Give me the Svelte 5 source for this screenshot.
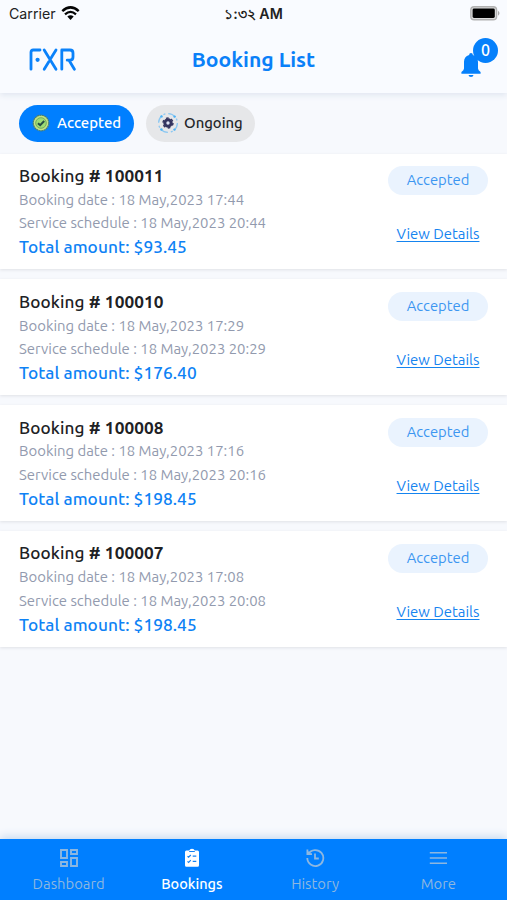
<script>
  const bookings = [
    { id: '100011', date: '18 May,2023 17:44', schedule: '18 May,2023 20:44', total: '$93.45' },
    { id: '100010', date: '18 May,2023 17:29', schedule: '18 May,2023 20:29', total: '$176.40' },
    { id: '100008', date: '18 May,2023 17:16', schedule: '18 May,2023 20:16', total: '$198.45' },
    { id: '100007', date: '18 May,2023 17:08', schedule: '18 May,2023 20:08', total: '$198.45' }
  ];
</script>

<div class="screen">
  <header>
    <div class="status">
      <div class="carrier">
        <span>Carrier</span>
        <svg width="19" height="15" viewBox="0 0 19 15">
          <path d="M1.3 5.1Q9.5-2.3 17.7 5.1" fill="none" stroke="#050505" stroke-width="2.5" />
          <path d="M4 8.3Q9.5 3.4 15 8.3" fill="none" stroke="#050505" stroke-width="2.3" />
          <path d="M6.3 10.6Q9.5 7.8 12.7 10.6L9.5 14Z" fill="#050505" />
        </svg>
      </div>
      <span class="time">১:৩২ AM</span>
      <svg class="battery" width="31" height="15" viewBox="0 0 31 15">
        <rect x=".8" y=".8" width="25.8" height="13" rx="3.4" fill="#ddd" stroke="#b1b1b1" stroke-width="1.4" />
        <rect x="2.6" y="2.6" width="22.2" height="9.4" rx="1.4" fill="#000" />
        <path d="M28 4.8Q31 7.3 28 9.8Z" fill="#aaa" />
      </svg>
    </div>
    <div class="title-row">
      <svg class="logo" width="48" height="24" viewBox="0 0 48 24" role="img" aria-label="FXR">
        <g fill="none" stroke="#0b82fa" stroke-width="2.8" stroke-linecap="round" stroke-linejoin="round">
          <path d="M3 21.2V4.2Q3 2 5.2 2H12" />
          <path d="M16.2 2L28 21.2M28 2L22.9 10.2M20.8 13.8L16.2 21.2" />
          <path d="M33.8 21.2V2H42Q45 2 45 5V9Q45 12.2 42 12.2H39.2M41.3 12.8L46.4 21.2" />
        </g>
        <circle cx="9.6" cy="11.8" r="2.1" fill="#0b82fa" />
      </svg>
      <h1>Booking List</h1>
      <div class="bell">
        <svg width="20" height="25" viewBox="0 0 20 25" fill="#0580fb">
          <path d="M10 0Q11.8 0 11.9 2.1Q17 3.6 17 9V15.5Q17 17.4 19.6 19V20.7H.4V19Q3 17.4 3 15.5V9Q3 3.6 8.1 2.1Q8.2 0 10 0Z" />
          <path d="M7.5 22H12.5Q12.2 24 10 24T7.5 22Z" />
        </svg>
        <span class="count">0</span>
      </div>
    </div>
  </header>

  <div class="filters">
    <button class="chip active">
      <svg width="18" height="18" viewBox="0 0 18 18">
        <circle cx="9" cy="9" r="7.8" fill="#c3e283" stroke="#4a7d72" stroke-width="1.2" stroke-dasharray="2 .5" />
        <circle cx="9" cy="9" r="5.3" fill="#9cdc74" stroke="#6ca65c" stroke-width=".9" />
        <path d="M6 9.2L8.2 11.2L12.2 7" fill="none" stroke="#254c45" stroke-width="2" />
      </svg>
      <span>Accepted</span>
    </button>
    <button class="chip">
      <svg width="22" height="22" viewBox="0 0 22 22">
        <circle cx="11" cy="11" r="9.4" fill="none" stroke="#8cc8f2" stroke-width="1.3" stroke-dasharray="8 1.8 2 2.965" />
        <g fill="#4eb2f5"><circle cx="4.5" cy="4.4" r="1.2" /><circle cx="17.6" cy="4.6" r="1.2" /><circle cx="17.5" cy="17.6" r="1.2" /><circle cx="4.4" cy="17.5" r="1.2" /></g>
        <circle cx="11" cy="11" r="3.2" fill="#dce1f3" stroke="#343460" stroke-width="3" />
        <circle cx="11" cy="11" r="5" fill="none" stroke="#343460" stroke-width="1.4" stroke-dasharray="2.6 2.636" />
      </svg>
      <span>Ongoing</span>
    </button>
  </div>

  <main>
    {#each bookings as b (b.id)}
      <article>
        <div class="info">
          <h2>Booking <b># {b.id}</b></h2>
          <p class="meta">Booking date : <span>{b.date}</span></p>
          <p class="meta">Service schedule : <span>{b.schedule}</span></p>
          <p class="total">Total amount: {b.total}</p>
        </div>
        <div class="side">
          <span class="badge">Accepted</span>
          <a href="#details">View Details</a>
        </div>
      </article>
    {/each}
  </main>

  <nav>
    <div class="tab">
      <svg width="20" height="20" viewBox="0 0 20 20" fill="none" stroke="currentColor" stroke-width="1.9">
        <path d="M2 2H8V10H2ZM12 2H18V6H12ZM2 14H8V18H2ZM12 10H18V18H12Z" />
      </svg>
      <span>Dashboard</span>
    </div>
    <div class="tab on">
      <svg width="20" height="20" viewBox="0 0 20 20">
        <path d="M4.4 2.5H7.3Q7.7.8 10 .8T12.7 2.5H15.6Q17 2.5 17 4V17.2Q17 18.8 15.6 18.8H4.4Q3 18.8 3 17.2V4Q3 2.5 4.4 2.5Z" fill="#fff" />
        <path d="M7.2 3.5H12.8M5.5 8.2L6.6 9.2L8.8 7M10.7 8.2H14.3M5.5 13.4L6.6 14.4L8.8 12.2M10.7 13.4H14.3" fill="none" stroke="#1683f3" stroke-width="1.2" />
      </svg>
      <span>Bookings</span>
    </div>
    <div class="tab">
      <svg width="20" height="20" viewBox="0 0 20 20" fill="none" stroke="currentColor" stroke-width="1.8">
        <path d="M3.4 6A8 8 0 1 1 2.3 10M2.4 1.6V6.2H7M10 5.5V10.5H13.8" />
        <path d="M2 2L7 6.9H2Z" fill="currentColor" stroke="none" />
      </svg>
      <span>History</span>
    </div>
    <div class="tab">
      <svg width="20" height="20" viewBox="0 0 20 20" fill="none" stroke="currentColor" stroke-width="1.6">
        <path d="M1.8 4.8H19M1.8 10H19M1.8 15.2H19" />
      </svg>
      <span>More</span>
    </div>
  </nav>
</div>

<style>
  .screen {
    width: 507px;
    height: 900px;
    display: flex;
    flex-direction: column;
    overflow: hidden;
    background: #f7f9fd;
    font-family: Ubuntu, 'Noto Sans', 'Open Sans', sans-serif;
    color: #202124;
  }
  h1, h2, p { margin: 0; font-weight: 500; }
  svg { display: block; flex: none; }
  header {
    height: 92.5px;
    flex: none;
    background: #f9fbff;
    box-shadow: 0 2px 6px #dfe5ef;
  }
  .status {
    height: 27px;
    display: grid;
    grid-template-columns: 1fr auto 1fr;
    align-items: center;
    padding: 0 6px 0 9px;
    font: 14.2px/27px Inter, 'Liberation Sans', sans-serif;
    color: #222;
  }
  .carrier { display: flex; align-items: center; gap: 5px; }
  .time { font-weight: 600; font-size: 14.2px; margin-left: -3px; }
  .battery { justify-self: end; }
  .title-row {
    height: 64px;
    display: grid;
    grid-template-columns: 1fr auto 1fr;
    align-items: center;
    padding: 0 27.5px;
  }
  .logo { margin-left: 0.5px; margin-top: 1px; }
  h1 { font-size: 21.1px; line-height: 28px; font-weight: 700; color: #0a80f8; }
  .bell { position: relative; justify-self: end; width: 37px; height: 40px; margin-right: -18.5px; }
  .bell svg { margin-top: 14px; }
  .count {
    position: absolute;
    right: 0;
    top: -1.5px;
    width: 25px;
    height: 25px;
    border-radius: 50%;
    background: #0580fb;
    color: #fff;
    text-align: center;
    font-size: 16px;
    line-height: 24.5px;
    font-weight: 500;
  }
  .filters { height: 61px; flex: none; display: flex; gap: 12px; padding: 12.5px 19px 0; box-sizing: border-box; }
  .chip {
    width: 109px;
    height: 36.5px;
    display: flex;
    align-items: center;
    gap: 5px;
    padding: 0 0 0 11px;
    border: 0;
    border-radius: 19px;
    background: #e6e7e9;
    color: #25272b;
    font: 500 14.9px/20px Ubuntu, 'Noto Sans', sans-serif;
  }
  .chip.active { width: 115px; gap: 7px; padding-left: 13px; background: #007fff; color: #fff; }
  main { flex: 1; display: flex; flex-direction: column; gap: 10px; }
  article {
    height: 115.85px;
    flex: none;
    display: flex;
    justify-content: space-between;
    padding: 0 19px;
    box-sizing: border-box;
    background: #fff;
    box-shadow: 0 1px 3px #dfe1e6;
  }
  .info { padding-top: 10.4px; white-space: nowrap; }
  h2 { font-size: 17.2px; line-height: 23.9px; letter-spacing: 0.1px; }
  h2 b { font-weight: 700; }
  .meta { font-size: 14.9px; line-height: 23.3px; font-weight: 400; color: #929aae; }
  .total { font-size: 17.3px; line-height: 26px; letter-spacing: 0.06px; color: #0e82f5; }
  .side { width: 100px; display: flex; flex-direction: column; align-items: center; padding-top: 12.5px; }
  .badge {
    width: 100px;
    height: 29px;
    border-radius: 15px;
    background: #eaf3fe;
    color: #3c96f1;
    text-align: center;
    font-size: 14.8px;
    line-height: 28.5px;
  }
  a { margin-top: 29px; font-size: 14.9px; line-height: 20px; color: #1584ef; text-underline-offset: 2px; white-space: nowrap; }
  nav {
    height: 61px;
    flex: none;
    display: flex;
    padding: 0 7px;
    background: #007fff;
    box-shadow: 0 -2px 9px #c2d7ee;
  }
  .tab {
    flex: 1;
    display: flex;
    flex-direction: column;
    align-items: center;
    padding-top: 9px;
    color: #8db7e0;
    font-size: 14.8px;
  }
  .tab span { margin-top: 5px; line-height: 21px; }
  .tab.on { color: #fff; font-weight: 500; font-size: 14.5px; }
</style>
